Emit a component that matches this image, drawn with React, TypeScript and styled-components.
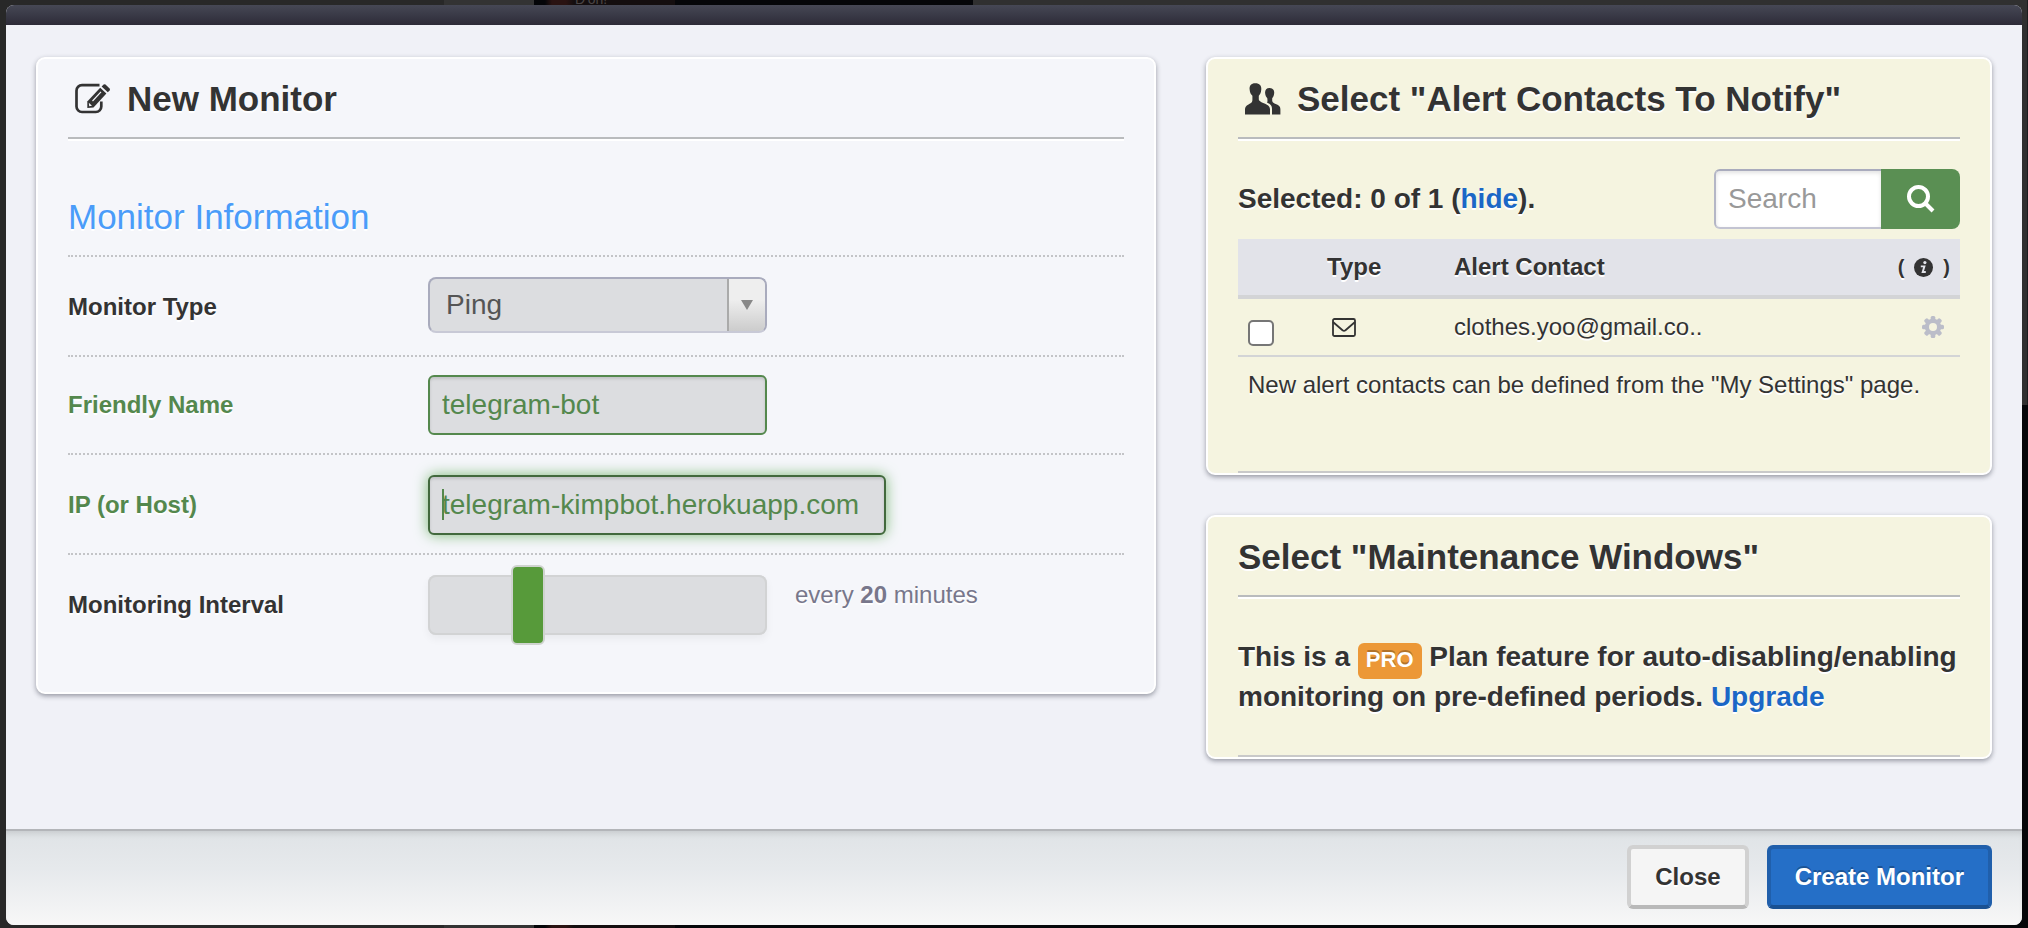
import React, { useState } from 'react';
import styled, { createGlobalStyle, css } from 'styled-components';

const color = {
  ink: '#333333',
  green: '#54884d',
  link: '#1b67c6',
  info: '#4a9cf9',
  rule: '#b9bbbd',
  field: '#dcdde0',
};

const GlobalStyle = createGlobalStyle`
  *, *::before, *::after { box-sizing: border-box; }
  body {
    margin: 0;
    background: #282828;
    color: ${color.ink};
    font: 24px/40px "Liberation Sans", Arial, Helvetica, sans-serif;
  }
  button, input, select { font: inherit; color: inherit; margin: 0; }
  h2, h3, p { margin: 0; }
  a { color: ${color.link}; text-decoration: none; }
`;

const Backdrop = styled.div`
  position: relative;
  display: flex;
  min-height: 100vh;
  padding: 5px 6px 3px;
  overflow: hidden;
  background:
    linear-gradient(#303030, #303030) right top / 52% 405px no-repeat,
    linear-gradient(90deg, #282828 444px, #333333 444px 534px, #040508 534px 545px, #2a1312 552px 566px, #140e0f 574px 675px, #050609 675px);
`;

const BackdropText = styled.span`
  position: absolute;
  top: -9px;
  left: 575px;
  font-size: 14px;
  line-height: 16px;
  color: #4a4545;
`;

const Modal = styled.form`
  position: relative;
  display: flex;
  flex: 1;
  flex-direction: column;
  min-width: 0;
  overflow: hidden;
  border-radius: 8px;
  background: #f0f1f7;
`;

const TitleBar = styled.div`
  height: 20px;
  background: linear-gradient(#464855, #2d2b38);
`;

const Body = styled.div`
  display: grid;
  flex: 1;
  grid-template-columns: minmax(0, 1120fr) minmax(0, 786fr);
  align-items: start;
  gap: 50px;
  padding: 32px 30px 60px;
`;

const Column = styled.div`
  display: flex;
  flex-direction: column;
  gap: 40px;
`;

const Card = styled.section<{ $tone?: 'plain' | 'cream' }>`
  padding: 20px 30px 0;
  border: 2px solid #ffffff;
  border-radius: 9px;
  background: ${(p) => (p.$tone === 'cream' ? '#f5f4e0' : '#f5f6fa')};
  box-shadow: 0 2px 5px rgba(40, 45, 60, 0.45);
  text-shadow: 0 2px 0 #ffffff;
`;

const CardTitle = styled.h2`
  display: flex;
  align-items: center;
  gap: 16px;
  height: 60px;
  padding-bottom: 18px;
  border-bottom: 2px solid ${color.rule};
  box-shadow: 0 2px 0 #ffffff;
  font-size: 35px;
  line-height: 40px;
  font-weight: 700;
`;

const TitleIcon = styled.svg`
  flex: none;
  width: 36px;
  height: 32px;
  margin-left: 7px;
  overflow: visible;
`;

const SectionTitle = styled.h3`
  padding: 58px 0 18px;
  color: ${color.info};
  font-size: 35px;
  font-weight: 400;
`;

const FieldRow = styled.div<{ $tight?: boolean; $last?: boolean }>`
  display: grid;
  grid-template-columns: 360px minmax(0, 1fr);
  min-height: 100px;
  padding: ${(p) => (p.$tight ? 18 : 20)}px 0 ${(p) => (p.$last ? 57 : 18)}px;
  border-top: 2px dotted #c3c4c7;
  ${(p) => p.$tight && css`min-height: 98px;`}
`;

const Label = styled.label<{ $valid?: boolean }>`
  line-height: 60px;
  font-weight: 700;
  color: ${(p) => (p.$valid ? color.green : color.ink)};
`;

const FieldArea = styled.div`
  position: relative;
  display: flex;
  align-items: flex-start;
  gap: 28px;
`;

const SelectBox = styled.div`
  display: flex;
  width: 339px;
  height: 56px;
  overflow: hidden;
  border: 2px solid #a9abbd;
  border-bottom-color: #c8c9d6;
  border-radius: 8px;
  background: ${color.field};
`;

const Select = styled.select`
  flex: 1;
  min-width: 0;
  padding: 0 16px;
  border: 0;
  outline: 0;
  appearance: none;
  background: transparent;
  color: #555555;
  font-size: 28px;
`;

const SelectArrow = styled.span`
  display: flex;
  align-items: center;
  justify-content: center;
  width: 38px;
  border-left: 2px solid #aaaaaa;
  background: linear-gradient(#eeeeee 40%, #cccccc);
  pointer-events: none;
`;

const TextInput = styled.input<{ $wide?: boolean; $active?: boolean }>`
  width: ${(p) => (p.$wide ? 458 : 339)}px;
  height: 60px;
  padding: 0 12px;
  border: 2px solid ${(p) => (p.$active ? '#42693d' : color.green)};
  border-radius: 6px;
  outline: 0;
  background: ${color.field};
  box-shadow: inset 0 2px 3px rgba(0, 0, 0, 0.12)
    ${(p) => p.$active && ', 0 0 14px #7fba79'};
  color: ${color.green};
  font-size: 28px;
`;

const Caret = styled.span`
  position: absolute;
  top: 14px;
  left: 14px;
  width: 2px;
  height: 31px;
  background: ${color.green};
`;

const thumb = css`
  width: 34px;
  height: 80px;
  border: 2px solid #cfd3cf;
  border-radius: 6px;
  background: #579a3a;
`;

const Slider = styled.input`
  width: 339px;
  height: 60px;
  appearance: none;
  border-radius: 8px;
  outline: 0;
  background: ${color.field};
  box-shadow: inset 0 0 0 2px #d2d3d4, 0 4px 8px rgba(0, 0, 0, 0.05);
  &::-webkit-slider-thumb { appearance: none; ${thumb} }
  &::-moz-range-thumb { box-sizing: border-box; ${thumb} }
`;

const IntervalNote = styled.output`
  color: #78778b;
`;

const PickerBar = styled.div`
  display: flex;
  align-items: center;
  justify-content: space-between;
  padding: 30px 0 10px;
  font-size: 28px;
  font-weight: 700;
`;

const SearchGroup = styled.div`
  display: flex;
  width: 246px;
  height: 60px;
`;

const SearchInput = styled.input`
  flex: 1;
  min-width: 0;
  padding: 0 12px;
  border: 2px solid #c3c4d2;
  border-top-color: #a9abbd;
  border-left-color: #b4b6c6;
  border-right: 0;
  border-radius: 6px 0 0 6px;
  outline: 0;
  background: #ffffff;
  box-shadow: inset 0 2px 4px rgba(0, 0, 0, 0.12);
  font-size: 28px;
  font-weight: 400;
  &::placeholder { color: #999999; opacity: 1; }
`;

const SearchButton = styled.button`
  display: flex;
  align-items: center;
  justify-content: center;
  width: 79px;
  padding: 0;
  border: 0;
  border-radius: 0 8px 8px 0;
  background: #5a8f53;
`;

const ContactTable = styled.table`
  width: 100%;
  border-collapse: separate;
  border-spacing: 0;
  table-layout: fixed;
  text-align: left;
  th, td { padding: 0 10px; white-space: nowrap; }
  th {
    height: 60px;
    border-bottom: 4px solid #d3d4d6;
    background: #e2e3e9;
    font-weight: 700;
  }
  td { height: 58px; border-bottom: 2px solid #d3d4d6; }
  svg { display: block; overflow: visible; }
`;

const CheckCol = styled.col`width: 79px;`;
const TypeCol = styled.col`width: 127px;`;
const ToolCol = styled.col`width: 90px;`;

const InfoLabel = styled.span`
  display: flex;
  align-items: center;
  justify-content: flex-end;
  gap: 10px;
  font-size: 20px;
`;

const Checkbox = styled.input`
  display: block;
  width: 26px;
  height: 26px;
  margin-top: 12px;
  appearance: none;
  border: 2px solid #767676;
  border-radius: 5px;
  background: #ffffff;
  &:checked { background: ${color.green}; }
`;

const MailIcon = styled.svg`
  margin-left: 5px;
`;

const GearButton = styled.button`
  display: block;
  margin-left: auto;
  margin-right: 6px;
  padding: 0;
  border: 0;
  background: none;
`;

const TableNote = styled.p`
  padding: 8px 10px 66px;
`;

const Rule = styled.div`
  height: 2px;
  background: #c9c9c9;
`;

const PlanNote = styled.p`
  padding: 40px 0 38px;
  font-size: 28px;
  font-weight: 700;
`;

const Badge = styled.span`
  display: inline-block;
  height: 36px;
  margin-bottom: -4px;
  padding: 0 8px;
  border-radius: 6px;
  background: #ec9837;
  color: #ffffff;
  font-size: 22px;
  line-height: 34px;
  text-shadow: 0 -2px 0 rgba(0, 0, 0, 0.25);
  vertical-align: middle;
`;

const Footer = styled.div`
  display: flex;
  justify-content: flex-end;
  gap: 18px;
  padding: 14px 30px 16px;
  border-top: 2px solid #b3b5b9;
  background: linear-gradient(#dfe3e6, #e6e9ec 40%, #f7f7f7);
  box-shadow: inset 0 5px 6px -3px rgba(0, 0, 0, 0.12);
`;

const Button = styled.button<{ $primary?: boolean }>`
  height: 64px;
  padding: 0 24px;
  border: 4px solid ${(p) => (p.$primary ? '#205fab' : '#d1d1d1')};
  border-bottom-color: ${(p) => (p.$primary ? '#1a5192' : '#b9b9b9')};
  border-radius: 6px;
  background: ${(p) => (p.$primary ? '#256fc7' : '#f5f5f5')};
  color: ${(p) => (p.$primary ? '#ffffff' : color.ink)};
  font-weight: 700;
  line-height: 40px;
  text-shadow: ${(p) => (p.$primary ? '0 -2px 0 rgba(0, 0, 0, 0.25)' : '0 2px 0 #ffffff')};
`;

const EditIcon = () => (
  <TitleIcon viewBox="0 0 36 32" fill="none" aria-hidden="true">
    <path d="M24.500 2.200H7A5.500 5.500 0 0 0 1.500 7.700V23.500A5.500 5.500 0 0 0 7 29H20.800A5.500 5.500 0 0 0 26.300 23.500V18.500" stroke="#333" strokeWidth="2.700" />
    <path d="M12.300 25V18.500L25.200 4.800L31.400 10.600L18.500 24.500Z" fill="#333" />
    <path d="M26.600 3.400L28.600 1.600Q29.500 .9 30.500 1.600L34.600 5.400Q35.500 6.500 34.600 7.600L32.800 9.300Z" fill="#333" />
    <path d="M17.500 18L26 8.800" stroke="#f5f6fa" strokeWidth="1.200" />
    <path d="M13.800 19.800L17 22.700L14.200 23.200Z" fill="#f5f6fa" />
  </TitleIcon>
);

const PeopleIcon = () => (
  <TitleIcon viewBox="0 0 36 32" fill="#333" aria-hidden="true">
    <path d="M10.300 .2C14.600 .2 16.600 2.800 16.300 6.200C16.100 9.500 15.200 11.200 13.800 12.800V16.500C14.200 18.600 18 19.800 21.500 21.400C24.200 22.700 25 24.200 25 26.500V31.500H0V26.500C0 24.200 .8 22.700 3.500 21.400C7 19.800 7.400 18.600 7.400 16.500V12.800C5.700 11.200 4.900 9.500 4.600 6.200C4.300 2.800 6 .2 10.300 .2Z" />
    <path d="M24.600 5C28 5 29.400 7.200 29.200 10C29 12.700 28.200 14 27.200 15.200V18C27.500 20 30 20.600 32.500 21.800C34.700 23 35.400 24.300 35.400 26.500V31.500H27V26C27 23 25.800 21.200 22 19.500C22.700 18.800 22.500 17.500 22.300 15.200C21.300 14 20.300 12.700 20.100 10C19.900 7.200 21.200 5 24.600 5Z" />
  </TitleIcon>
);

const SearchIcon = () => (
  <svg width="28" height="28" viewBox="0 0 28 28" fill="none" stroke="#fff" strokeWidth="4" aria-hidden="true">
    <circle cx="11.500" cy="11.500" r="9.500" />
    <path d="M18 18L26 26" />
  </svg>
);

const InfoIcon = () => (
  <svg width="19" height="19" viewBox="0 0 19 19" role="img" aria-label="Info">
    <circle cx="9.500" cy="9.500" r="9.500" fill="#333" />
    <circle cx="10.900" cy="4.600" r="1.600" fill="#e2e3e9" />
    <path d="M6.800 8.400H10.400L8.700 14H11.800" fill="none" stroke="#e2e3e9" strokeWidth="1.900" />
  </svg>
);

const GearIcon = () => (
  <svg width="22" height="22" viewBox="-11 -11 22 22" aria-hidden="true">
    <g fill="#bbbdc9">
      {[0, 45, 90, 135].map((angle) => (
        <rect key={angle} x="-2.300" y="-11" width="4.600" height="22" rx="1.500" transform={`rotate(${angle})`} />
      ))}
      <circle r="8.200" />
    </g>
    <circle r="4" fill="#f5f4e0" />
  </svg>
);

export default function App() {
  const [interval, setIntervalValue] = useState(20);
  const [name, setName] = useState('telegram-bot');
  const [host, setHost] = useState('telegram-kimpbot.herokuapp.com');

  return (
    <>
      <GlobalStyle />
      <Backdrop>
        <BackdropText>D&#39;oh!</BackdropText>
        <Modal onSubmit={(e) => e.preventDefault()}>
          <TitleBar />
          <Body>
            <Card>
              <CardTitle><EditIcon />New Monitor</CardTitle>
              <SectionTitle>Monitor Information</SectionTitle>
              <FieldRow>
                <Label htmlFor="type">Monitor Type</Label>
                <FieldArea>
                  <SelectBox>
                    <Select id="type" defaultValue="Ping">
                      <option>Ping</option>
                    </Select>
                    <SelectArrow>
                      <svg width="12" height="10" viewBox="0 0 12 10" aria-hidden="true"><path d="M0 0H12L6 10Z" fill="#888" /></svg>
                    </SelectArrow>
                  </SelectBox>
                </FieldArea>
              </FieldRow>
              <FieldRow $tight>
                <Label htmlFor="name" $valid>Friendly Name</Label>
                <FieldArea>
                  <TextInput id="name" value={name} onChange={(e) => setName(e.target.value)} />
                </FieldArea>
              </FieldRow>
              <FieldRow>
                <Label htmlFor="host" $valid>IP (or Host)</Label>
                <FieldArea>
                  <TextInput id="host" $wide $active value={host} onChange={(e) => setHost(e.target.value)} />
                  <Caret />
                </FieldArea>
              </FieldRow>
              <FieldRow $last>
                <Label htmlFor="interval">Monitoring Interval</Label>
                <FieldArea>
                  <Slider
                    id="interval"
                    type="range"
                    min={5}
                    max={60}
                    value={interval}
                    onChange={(e) => setIntervalValue(Number(e.target.value))}
                  />
                  <IntervalNote htmlFor="interval">every <b>{interval}</b> minutes</IntervalNote>
                </FieldArea>
              </FieldRow>
            </Card>

            <Column>
              <Card $tone="cream">
                <CardTitle><PeopleIcon />Select "Alert Contacts To Notify"</CardTitle>
                <PickerBar>
                  <p>Selected: 0 of 1 (<a href="#contacts">hide</a>).</p>
                  <SearchGroup>
                    <SearchInput type="text" placeholder="Search" aria-label="Search" />
                    <SearchButton type="button" aria-label="Run search"><SearchIcon /></SearchButton>
                  </SearchGroup>
                </PickerBar>
                <ContactTable id="contacts">
                  <colgroup><CheckCol /><TypeCol /><col /><ToolCol /></colgroup>
                  <thead>
                    <tr>
                      <th />
                      <th>Type</th>
                      <th>Alert Contact</th>
                      <th><InfoLabel>(<InfoIcon />)</InfoLabel></th>
                    </tr>
                  </thead>
                  <tbody>
                    <tr>
                      <td><Checkbox type="checkbox" aria-label="clothes.yoo@gmail.co.." /></td>
                      <td>
                        <MailIcon width="24" height="19" viewBox="0 0 24 19" fill="none" stroke="#333" strokeWidth="1.800" role="img" aria-label="E-mail">
                          <rect x="1" y="1" width="22" height="17" rx="1.500" />
                          <path d="M1 4L10.500 12.300Q12 13.300 13.500 12.300L23 4" />
                        </MailIcon>
                      </td>
                      <td>clothes.yoo@gmail.co..</td>
                      <td><GearButton type="button" aria-label="Contact settings"><GearIcon /></GearButton></td>
                    </tr>
                  </tbody>
                </ContactTable>
                <TableNote>New alert contacts can be defined from the "My Settings" page.</TableNote>
                <Rule />
              </Card>

              <Card $tone="cream">
                <CardTitle>Select "Maintenance Windows"</CardTitle>
                <PlanNote>
                  This is a <Badge>PRO</Badge> Plan feature for auto-disabling/enabling monitoring on pre-defined periods.{' '}
                  <a href="#upgrade">Upgrade</a>
                </PlanNote>
                <Rule />
              </Card>
            </Column>
          </Body>
          <Footer>
            <Button type="button">Close</Button>
            <Button type="submit" $primary>Create Monitor</Button>
          </Footer>
        </Modal>
      </Backdrop>
    </>
  );
}
